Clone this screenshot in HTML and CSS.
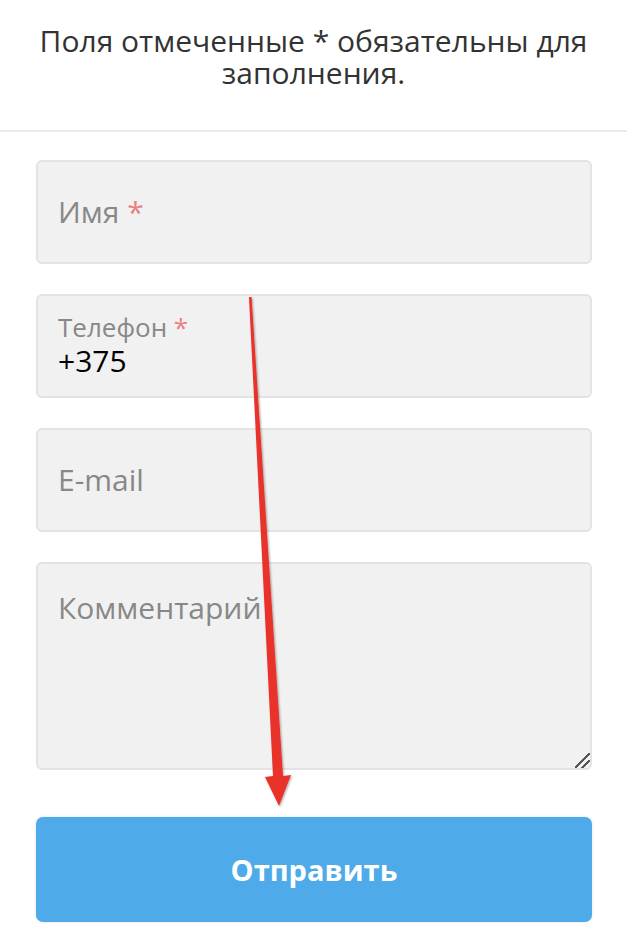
FILE: index.html
```html
<!DOCTYPE html>
<html lang="ru">
<head>
    <meta charset="UTF-8">
    <meta name="viewport" content="width=device-width, initial-scale=1.0">
    <title>Форма</title>
    <link rel="stylesheet" href="styles.css">
</head>
<body>
    <div class="page">
        <div class="notice">
            <p>Поля отмеченные * обязательны для заполнения.</p>
        </div>

        <form class="form">
            <label class="field">
                <span class="label big">Имя <span class="req">*</span></span>
            </label>
            <label class="field">
                <span class="label small">Телефон <span class="req">*</span></span>
                <input class="value" type="tel" value="+375">
            </label>
            <label class="field">
                <span class="label big">E-mail</span>
            </label>
            <textarea class="comment" placeholder="Комментарий"></textarea>
            <button class="button" type="button">Отправить</button>
        </form>

        <svg class="arrow" width="627" height="946" viewBox="0 0 627 946">
            <defs>
                <filter id="shadow" x="-50%" y="-10%" width="200%" height="120%">
                    <feDropShadow dx="1" dy="1" stdDeviation="1.2" flood-color="#000" flood-opacity="0.35"/>
                </filter>
            </defs>
            <path d="M249 297 L251.5 297 L283 776 L291 775 L279 806 L265 777 L273 776 Z" fill="#e8312a" filter="url(#shadow)"/>
        </svg>
    </div>
</body>
</html>
```

FILE: styles.css
```css
body {
    margin: 0;
    padding: 0;
    font-family: "Open Sans", Arial, sans-serif;
    background-color: #fff;
}
.page {
    position: relative;
    width: 627px;
    height: 946px;
    overflow: hidden;
}
.notice {
    padding: 25px 20px 41px;
    border-bottom: 2px solid #ebebeb;
    text-align: center;
}
.notice p {
    margin: 0;
    font-size: 30px;
    line-height: 32px;
    color: #333;
}
.form {
    display: flex;
    flex-direction: column;
    gap: 30px;
    padding: 28px 35px 0 36px;
}
.field {
    display: flex;
    flex-direction: column;
    justify-content: center;
    height: 100px;
    padding: 0 20px;
    background-color: #f1f1f1;
    border: 2px solid #e3e3e3;
    border-radius: 6px;
}
.label {
    color: #888;
}
.label.big {
    font-size: 30px;
    line-height: 36px;
}
.label.small {
    font-size: 26px;
    line-height: 30px;
}
.req {
    color: #ec7f7f;
}
.value {
    margin: 0;
    padding: 0;
    border: none;
    background: transparent;
    font-family: inherit;
    font-size: 30px;
    line-height: 38px;
    color: #000;
    outline: none;
}
.comment {
    box-sizing: border-box;
    height: 208px;
    margin: 0;
    padding: 26px 20px;
    background-color: #f1f1f1;
    border: 2px solid #e3e3e3;
    border-radius: 6px;
    font-family: inherit;
    font-size: 30px;
    line-height: 36px;
    color: #000;
    resize: vertical;
    outline: none;
}
.comment::placeholder {
    color: #888;
}
.comment::-webkit-resizer {
    background: linear-gradient(135deg, transparent 0 44%, #555 44% 54%, transparent 54% 70%, #555 70% 80%, transparent 80%);
}
.button {
    height: 105px;
    margin-top: 17px;
    background-color: #4eaae8;
    color: #fff;
    border: none;
    border-radius: 7px;
    font-family: inherit;
    font-weight: 700;
    font-size: 29px;
    box-shadow: 0 0 3px rgba(0, 0, 0, 0.12);
    cursor: pointer;
}
.arrow {
    position: absolute;
    top: 0;
    left: 0;
    pointer-events: none;
}
```
